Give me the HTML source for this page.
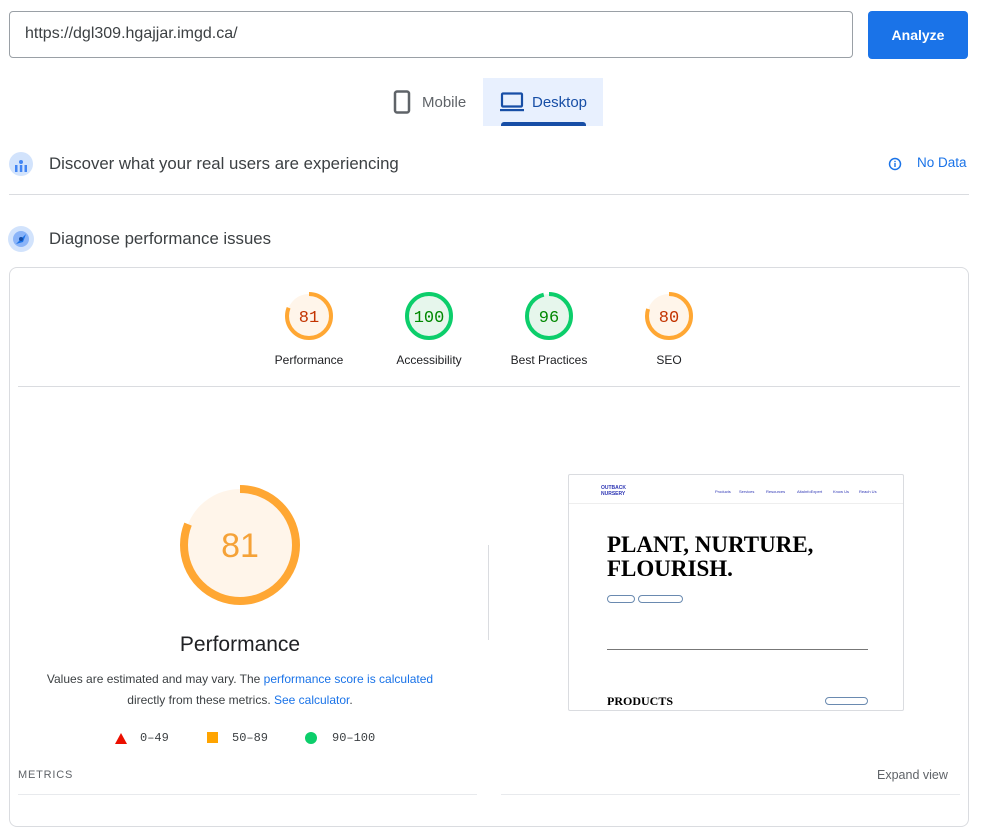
<!DOCTYPE html>
<html><head><meta charset="utf-8"><style>
*{box-sizing:border-box;margin:0;padding:0}
body{width:991px;height:806px;overflow:hidden;background:#fff;font-family:"Liberation Sans",Arial,sans-serif;color:#202124;position:relative}
.abs{position:absolute}
.mono{font-family:"Liberation Mono","DejaVu Sans Mono",monospace}
</style></head><body>
<div class="abs" style="left:9px;top:11px;width:844px;height:47px;border:1px solid #9aa0a6;border-radius:4px;padding:13px 0 0 15px;font-size:16px;color:#3c4043">https://dgl309.hgajjar.imgd.ca/</div>
<div class="abs" style="left:868px;top:11px;width:100px;height:48px;background:#1a73e8;border-radius:4px;color:#fff;font-weight:bold;font-size:14px;text-align:center;line-height:48px">Analyze</div>

<div class="abs" style="left:483px;top:78px;width:120px;height:48px;background:#e8f0fe"></div>
<div class="abs" style="left:501px;top:122px;width:85px;height:4px;background:#174ea6;border-radius:3px 3px 0 0"></div>
<svg class="abs" style="left:393px;top:90px" width="18" height="24"><rect x="2" y="1.5" width="14" height="21" rx="2" fill="none" stroke="#5f6368" stroke-width="2.5"/></svg>
<div class="abs" style="left:422px;top:94px;font-size:15px;color:#5f6368">Mobile</div>
<svg class="abs" style="left:500px;top:92px" width="24" height="20"><rect x="2" y="1.5" width="20" height="13" rx="1" fill="none" stroke="#174ea6" stroke-width="2.2"/><rect x="0" y="17" width="24" height="2.2" fill="#174ea6"/></svg>
<div class="abs" style="left:532px;top:94px;font-size:15px;color:#174ea6">Desktop</div>

<svg class="abs" style="left:9px;top:152px" width="24" height="24"><circle cx="12" cy="12" r="12" fill="#d2e3fc"/><circle cx="12" cy="10" r="2" fill="#4285f4"/><rect x="6" y="13" width="2.5" height="7" fill="#4285f4"/><rect x="10.8" y="13" width="2.5" height="7" fill="#4285f4"/><rect x="15.5" y="13" width="2.5" height="7" fill="#4285f4"/></svg>
<div class="abs" style="left:49px;top:154px;font-size:16.8px;color:#3c4043">Discover what your real users are experiencing</div>
<svg class="abs" style="left:888px;top:157px" width="14" height="14"><circle cx="7" cy="7" r="5.5" fill="none" stroke="#1a73e8" stroke-width="1.5"/><rect x="6.3" y="6" width="1.4" height="4" fill="#1a73e8"/><rect x="6.3" y="3.8" width="1.4" height="1.4" fill="#1a73e8"/></svg>
<div class="abs" style="left:917px;top:155px;font-size:13.5px;color:#1a73e8">No Data</div>
<div class="abs" style="left:9px;top:194px;width:960px;height:1px;background:#dadce0"></div>

<svg class="abs" style="left:8px;top:226px" width="26" height="26"><circle cx="13" cy="13" r="13" fill="#d2e3fc"/><circle cx="13" cy="13" r="8" fill="#8ab4f8"/><path d="M8 18 L18 8 L15 16 Z" fill="#1a73e8"/><circle cx="13" cy="13" r="2" fill="#174ea6"/></svg>
<div class="abs" style="left:49px;top:229px;font-size:16.8px;color:#3c4043">Diagnose performance issues</div>

<div class="abs" style="left:9px;top:267px;width:960px;height:560px;border:1px solid #dadce0;border-radius:8px"></div>

<svg class="abs" style="left:0;top:0" width="991" height="806">
<g stroke-width="4" fill="none">
<circle cx="309" cy="316" r="22" fill="#fff5ea" stroke="none"/>
<circle cx="309" cy="316" r="22" stroke="#ffa733" stroke-dasharray="112 200" transform="rotate(-90 309 316)"/>
<circle cx="429" cy="316" r="22" fill="#e6f6ec" stroke="#0cce6b"/>
<circle cx="549" cy="316" r="22" fill="#e6f6ec" stroke="none"/>
<circle cx="549" cy="316" r="22" stroke="#0cce6b" stroke-dasharray="132.7 200" transform="rotate(-90 549 316)"/>
<circle cx="669" cy="316" r="22" fill="#fff5ea" stroke="none"/>
<circle cx="669" cy="316" r="22" stroke="#ffa733" stroke-dasharray="110.6 200" transform="rotate(-90 669 316)"/>
<circle cx="240" cy="545" r="56" fill="#fff5ea" stroke="none"/>
<circle cx="240" cy="545" r="56" stroke="#ffa733" stroke-width="8" stroke-dasharray="285 400" transform="rotate(-90 240 545)"/>
</g>
<g font-family="Liberation Mono,monospace" font-size="17" text-anchor="middle">
<text x="309" y="322" fill="#c33300">81</text>
<text x="429" y="322" fill="#008800">100</text>
<text x="549" y="322" fill="#008800">96</text>
<text x="669" y="322" fill="#c33300">80</text>
<text x="240" y="557" font-size="34" font-family="Liberation Sans,sans-serif" fill="#f5a238">81</text>
</g>
<g font-size="12" text-anchor="middle" fill="#202124" font-family="Liberation Sans,sans-serif">
<text x="309" y="364">Performance</text><text x="429" y="364">Accessibility</text><text x="549" y="364">Best Practices</text><text x="669" y="364">SEO</text>
</g>
<path d="M115 744 L121 733 L127 744Z" fill="#eb0f00"/>
<rect x="207" y="732" width="11" height="11" fill="#ffa400"/>
<circle cx="311" cy="738" r="6" fill="#0cce6b"/>
</svg>
<div class="abs" style="left:18px;top:386px;width:942px;height:1px;background:#dadce0"></div>

<div class="abs" style="left:140px;top:633px;width:200px;text-align:center;font-size:21px;color:#202124">Performance</div>
<div class="abs" style="left:40px;top:669px;width:400px;text-align:center;font-size:12px;line-height:21px;color:#3c4043">Values are estimated and may vary. The <span style="color:#1a73e8">performance score is calculated</span><br>directly from these metrics. <span style="color:#1a73e8">See calculator</span>.</div>
<div class="abs mono" style="left:140px;top:731px;font-size:12px;color:#3c4043">0–49</div>
<div class="abs mono" style="left:232px;top:731px;font-size:12px;color:#3c4043">50–89</div>
<div class="abs mono" style="left:332px;top:731px;font-size:12px;color:#3c4043">90–100</div>
<div class="abs" style="left:488px;top:545px;width:1px;height:95px;background:#dadce0"></div>

<div class="abs" style="left:568px;top:474px;width:336px;height:237px;border:1px solid #dadce0;border-radius:2px;overflow:hidden;background:#fff">
<div style="position:absolute;left:32px;top:10px;font-size:5px;font-weight:bold;color:#2d35b4;line-height:6px">OUTBACK<br>NURSERY</div>
<div style="position:absolute;left:146px;top:14px;font-size:4px;color:#2d35b4;white-space:nowrap">
<span style="position:absolute;left:0">Products</span><span style="position:absolute;left:24px">Services</span><span style="position:absolute;left:51px">Resources</span><span style="position:absolute;left:82px">AltaInfoExpert</span><span style="position:absolute;left:118px">Know Us</span><span style="position:absolute;left:144px">Reach Us</span></div>
<div style="position:absolute;left:0;top:28px;width:336px;height:1px;background:#eee"></div>
<div style="position:absolute;left:38px;top:58px;font-family:'Liberation Serif',serif;font-weight:bold;font-size:23px;line-height:24px;color:#000">PLANT, NURTURE,<br>FLOURISH.</div>
<div style="position:absolute;left:38px;top:120px;width:28px;height:8px;border:1px solid #6a8ab0;border-radius:5px"></div>
<div style="position:absolute;left:69px;top:120px;width:45px;height:8px;border:1px solid #6a8ab0;border-radius:5px"></div>
<div style="position:absolute;left:38px;top:174px;width:261px;height:1px;background:#777"></div>
<div style="position:absolute;left:38px;top:219px;font-family:'Liberation Serif',serif;font-weight:bold;font-size:12px;color:#000">PRODUCTS</div>
<div style="position:absolute;left:256px;top:222px;width:43px;height:8px;border:1px solid #6a8ab0;border-radius:5px"></div>
</div>

<div class="abs" style="left:18px;top:769px;font-size:11px;letter-spacing:0.8px;color:#5f6368">METRICS</div>
<div class="abs" style="left:877px;top:768px;font-size:12.5px;color:#5f6368">Expand view</div>
<div class="abs" style="left:18px;top:794px;width:459px;height:1px;background:#e8eaed"></div>
<div class="abs" style="left:501px;top:794px;width:459px;height:1px;background:#e8eaed"></div>
</body></html>
